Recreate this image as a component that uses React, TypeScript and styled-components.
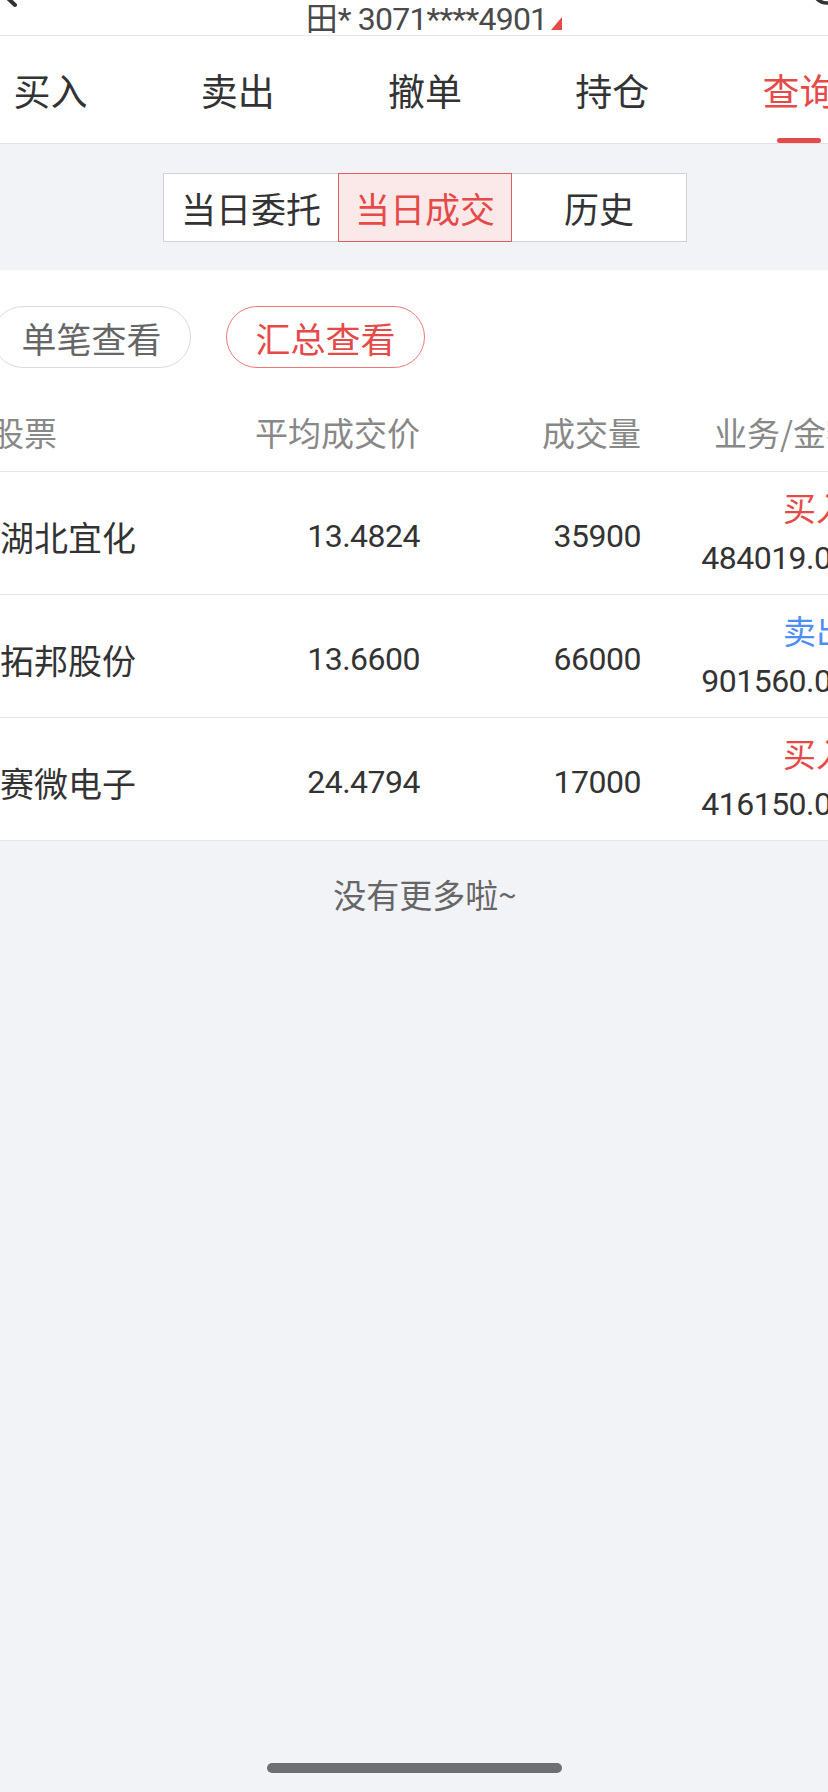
import React from "react";
import styled, { createGlobalStyle } from "styled-components";

const RED = "#e64a48";
const BLUE = "#4f8ef5";
const CJK = `"Noto Sans CJK SC", "Noto Sans", sans-serif`;
const NUM = `Roboto, "Noto Sans CJK SC", sans-serif`;

const Global = createGlobalStyle`
  html, body {
    margin: 0;
    padding: 0;
    width: 828px;
    height: 1792px;
    overflow: hidden;
    background: #f2f3f7;
    font-family: ${CJK};
    color: #333;
  }
`;

const Page = styled.div`
  width: 936px;
  margin-left: -43px;
  min-height: 1792px;
  background: #f2f3f7;
`;

const TopBar = styled.header`
  box-sizing: border-box;
  height: 36px;
  display: grid;
  grid-template-columns: 1fr auto 1fr;
  align-items: end;
  background: #fff;
  border-bottom: 1px solid #e4e4ea;
  padding: 0 30px 7px;
`;

const IconSlot = styled.div<{ $end?: boolean }>`
  align-self: start;
  justify-self: ${(p) => (p.$end ? "end" : "start")};
  width: 60px;
  height: 35px;
  svg {
    display: block;
    overflow: visible;
  }
`;

const Title = styled.div`
  margin-left: 18px;
  font-family: ${NUM};
  font-size: 32px;
  line-height: 32px;
  letter-spacing: -0.8px;
  color: #4a4a4a;
  white-space: nowrap;
`;

const Hanzi = styled.span`
  font-family: ${CJK};
  letter-spacing: 0;
`;

const Corner = styled.span`
  display: inline-block;
  width: 0;
  height: 0;
  margin-left: 4px;
  border-left: 11px solid transparent;
  border-bottom: 13px solid ${RED};
  vertical-align: baseline;
`;

const TabBar = styled.nav`
  box-sizing: border-box;
  height: 108px;
  display: flex;
  background: #fff;
  border-bottom: 1px solid #e2e2e8;
`;

const Tab = styled.div<{ $active?: boolean }>`
  position: relative;
  flex: 1;
  display: flex;
  align-items: center;
  justify-content: center;
  font-size: 37px;
  color: ${(p) => (p.$active ? RED : "#333")};
  &::after {
    content: "";
    display: ${(p) => (p.$active ? "block" : "none")};
    position: absolute;
    bottom: 0;
    left: 50%;
    width: 44px;
    height: 5px;
    margin-left: -22px;
    border-radius: 3px;
    background: ${RED};
  }
`;

const SegmentArea = styled.section`
  display: flex;
  justify-content: center;
  padding: 29px 0 28px;
`;

const Segments = styled.div`
  display: flex;
  border: 1px solid #d2d2d6;
  background: #fff;
`;

const Segment = styled.div<{ $active?: boolean }>`
  box-sizing: border-box;
  width: 174px;
  height: 67px;
  display: flex;
  align-items: center;
  justify-content: center;
  font-size: 35px;
  color: ${(p) => (p.$active ? RED : "#333")};
  background: ${(p) => (p.$active ? "#fbe8e9" : "#fff")};
  ${(p) =>
    p.$active
      ? `border: 1.5px solid #df5d5d; margin: -1px 0; height: 69px;`
      : ""}
`;

const Panel = styled.section`
  background: #fff;
`;

const PillRow = styled.div`
  display: flex;
  gap: 35px;
  padding: 36px 35px 0;
`;

const Pill = styled.div<{ $active?: boolean }>`
  box-sizing: border-box;
  width: 199px;
  height: 62px;
  border-radius: 31px;
  display: flex;
  align-items: center;
  justify-content: center;
  font-size: 35px;
  border: 1.5px solid ${(p) => (p.$active ? "#eb7a78" : "#dcdcdc")};
  color: ${(p) => (p.$active ? RED : "#666")};
`;

const Grid = styled.div`
  display: grid;
  grid-template-columns: 200px 220px 221px 208px;
  align-items: center;
  padding: 0 44px 0 43px;
  border-bottom: 1px solid #e6e6ec;
`;

const HeadRow = styled(Grid)`
  margin-top: 24px;
  height: 80px;
  box-sizing: border-box;
  font-size: 33px;
  color: #888;
`;

const Row = styled(Grid)`
  box-sizing: border-box;
  height: 123px;
  padding-top: 6px;
`;

const Cell = styled.div<{ $right?: boolean }>`
  text-align: ${(p) => (p.$right ? "right" : "left")};
  white-space: nowrap;
`;

const HeadFirst = styled(Cell)`
  margin-left: -9px;
`;

const HeadLast = styled(Cell)`
  margin-right: -10px;
`;

const Name = styled(Cell)`
  font-size: 34px;
  color: #333;
`;

const Num = styled(Cell)`
  font-family: ${NUM};
  font-size: 32px;
  letter-spacing: -0.5px;
  color: #333;
`;

const Deal = styled.div`
  display: flex;
  flex-direction: column;
  align-items: flex-end;
  line-height: 51px;
  white-space: nowrap;
  margin-top: -6px;
`;

const Side = styled.span<{ $sell?: boolean }>`
  font-size: 33px;
  color: ${(p) => (p.$sell ? BLUE : RED)};
`;

const Amount = styled.span`
  font-family: ${NUM};
  font-size: 32px;
  letter-spacing: -0.5px;
  color: #333;
`;

const NoMore = styled.div`
  padding-top: 37px;
  text-align: center;
  font-size: 33px;
  line-height: 32px;
  color: #666;
`;

const HomeBar = styled.div`
  position: fixed;
  left: 50%;
  bottom: 19px;
  width: 295px;
  height: 10px;
  margin-left: -147px;
  border-radius: 5px;
  background: #6e6f71;
`;

const rows = [
  { name: "湖北宜化", price: "13.4824", qty: "35900", side: "买入", amount: "484019.00" },
  { name: "拓邦股份", price: "13.6600", qty: "66000", side: "卖出", amount: "901560.00" },
  { name: "赛微电子", price: "24.4794", qty: "17000", side: "买入", amount: "416150.00" },
];

export default function App() {
  return (
    <>
      <Global />
      <Page>
        <TopBar>
          <IconSlot>
            <svg width="60" height="35" viewBox="0 0 60 35">
              <path
                d="M28 -30 L10 -12 L28 5"
                fill="none"
                stroke="#333"
                strokeWidth="4"
                strokeLinecap="round"
                strokeLinejoin="round"
              />
            </svg>
          </IconSlot>
          <Title>
            <Hanzi>田</Hanzi>* 3071****4901
            <Corner />
          </Title>
          <IconSlot $end>
            <svg width="60" height="35" viewBox="0 0 60 35">
              <circle cx="24" cy="-11" r="14" fill="none" stroke="#333" strokeWidth="3.5" />
            </svg>
          </IconSlot>
        </TopBar>

        <TabBar>
          <Tab>买入</Tab>
          <Tab>卖出</Tab>
          <Tab>撤单</Tab>
          <Tab>持仓</Tab>
          <Tab $active>查询</Tab>
        </TabBar>

        <SegmentArea>
          <Segments>
            <Segment>当日委托</Segment>
            <Segment $active>当日成交</Segment>
            <Segment>历史</Segment>
          </Segments>
        </SegmentArea>

        <Panel>
          <PillRow>
            <Pill>单笔查看</Pill>
            <Pill $active>汇总查看</Pill>
          </PillRow>
          <HeadRow>
            <HeadFirst>股票</HeadFirst>
            <Cell $right>平均成交价</Cell>
            <Cell $right>成交量</Cell>
            <HeadLast $right>业务/金额</HeadLast>
          </HeadRow>
          {rows.map((r) => (
            <Row key={r.name}>
              <Name>{r.name}</Name>
              <Num $right>{r.price}</Num>
              <Num $right>{r.qty}</Num>
              <Deal>
                <Side $sell={r.side === "卖出"}>{r.side}</Side>
                <Amount>{r.amount}</Amount>
              </Deal>
            </Row>
          ))}
        </Panel>

        <NoMore>没有更多啦~</NoMore>
      </Page>
      <HomeBar />
    </>
  );
}
